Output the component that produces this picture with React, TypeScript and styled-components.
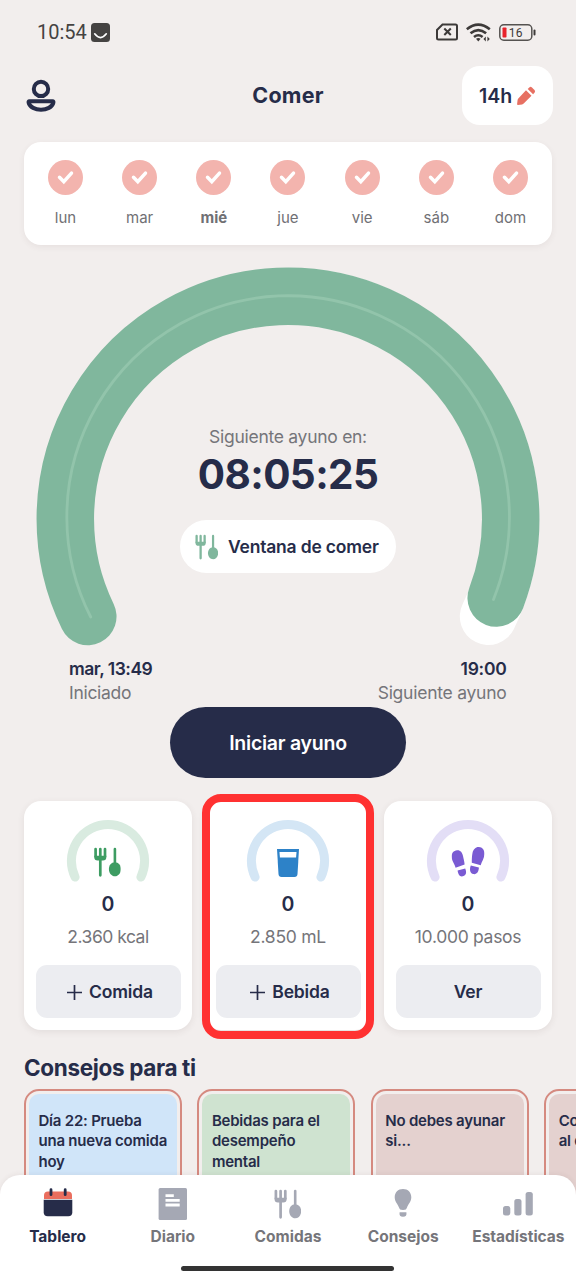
import React from "react";
import styled, { createGlobalStyle } from "styled-components";

const navy = "#262c49";
const gray = "#75757a";

const Global = createGlobalStyle`
  * { box-sizing: border-box; }
  body { margin: 0; background: #f2eeed; font-family: Inter, "Liberation Sans", sans-serif; }
`;

const Screen = styled.div`
  position: relative;
  width: 576px;
  height: 1280px;
  overflow: hidden;
  background: #f2eeed;
  color: ${navy};
  display: flex;
  flex-direction: column;
`;

const Label = styled.span<{ $size: number; $line: number; $weight?: number; $color?: string; $track?: number }>`
  display: block;
  white-space: nowrap;
  font-size: ${(p) => p.$size}px;
  line-height: ${(p) => p.$line}px;
  font-weight: ${(p) => p.$weight ?? 400};
  color: ${(p) => p.$color ?? navy};
  letter-spacing: ${(p) => p.$track ?? 0}px;
`;

const StatusBar = styled.div`
  height: 66px;
  flex: none;
  display: flex;
  justify-content: space-between;
  padding: 20px 40px 0 37px;
`;

const StatusGroup = styled.div<{ $gap: number }>`
  display: flex;
  align-items: center;
  height: 24px;
  gap: ${(p) => p.$gap}px;
`;

const Clock = styled.span`
  font: 400 20px/24px Roboto, sans-serif;
  color: #454342;
`;

const Header = styled.header`
  height: 59px;
  flex: none;
  display: grid;
  grid-template-columns: 90px 1fr 90px;
  align-items: center;
  padding: 0 24px;
`;

const Title = styled.div`
  justify-self: center;
  padding-bottom: 1px;
`;

const PlanButton = styled.button`
  height: 59px;
  width: 91px;
  border: 0;
  border-radius: 18px;
  background: #fff;
  font-family: inherit;
  display: flex;
  align-items: center;
  justify-content: center;
  gap: 4px;
  padding: 0;
`;

const Week = styled.div`
  margin: 17px 24px 0;
  height: 103px;
  flex: none;
  padding: 18px 4.4px 0;
  border-radius: 17px;
  background: #fff;
  box-shadow: 0 2px 6px rgba(80, 60, 50, 0.07);
  display: grid;
  grid-template-columns: repeat(7, 1fr);
`;

const Day = styled.div`
  display: flex;
  flex-direction: column;
  align-items: center;
  gap: 13px;
`;

const Timer = styled.section`
  height: 378px;
  flex: none;
  margin-top: 22px;
  display: grid;
  justify-items: center;
  > * { grid-area: 1 / 1; }
`;

const TimerInfo = styled.div`
  display: flex;
  flex-direction: column;
  align-items: center;
  padding-top: 158px;
`;

const Pill = styled.div`
  margin-top: 19px;
  width: 216px;
  height: 53px;
  border-radius: 27px;
  background: #fff;
  display: flex;
  align-items: center;
  padding-left: 15px;
  gap: 10px;
`;

const Times = styled.div`
  height: 62px;
  flex: none;
  display: flex;
  justify-content: space-between;
  padding: 12px 69.5px 0 69px;
`;

const TimeBlock = styled.div<{ $right?: boolean }>`
  display: flex;
  flex-direction: column;
  align-items: ${(p) => (p.$right ? "flex-end" : "flex-start")};
`;

const Start = styled.button`
  align-self: center;
  flex: none;
  width: 236px;
  height: 71px;
  border: 0;
  border-radius: 36px;
  background: ${navy};
  font-family: inherit;
  display: flex;
  align-items: center;
  justify-content: center;
`;

const Cards = styled.div`
  flex: none;
  margin: 23px 24px 0;
  display: grid;
  grid-template-columns: repeat(3, 1fr);
  gap: 12px;
`;

const Card = styled.div`
  position: relative;
  height: 229px;
  border-radius: 17px;
  background: #fff;
  box-shadow: 0 2px 7px rgba(80, 60, 50, 0.09);
  display: flex;
  flex-direction: column;
  align-items: center;
  padding-top: 18px;
`;

const Highlight = styled.div`
  position: absolute;
  inset: -7px -2px -9px;
  border: 8px solid #ff3131;
  border-radius: 19px;
`;

const CardAction = styled.button<{ $withIcon: boolean }>`
  margin-top: 16px;
  width: 145px;
  height: 53px;
  border: 0;
  border-radius: 11px;
  background: #ecedf1;
  font-family: inherit;
  display: flex;
  align-items: center;
  justify-content: center;
  gap: 7px;
  padding: 1px 0 0 ${(p) => (p.$withIcon ? 4 : 0)}px;
`;

const Tips = styled.section`
  flex: none;
  padding: 23px 0 0 24px;
`;

const TipRow = styled.div`
  display: flex;
  gap: 15.4px;
  margin-top: 6px;
`;

const Tip = styled.article`
  flex: none;
  width: 158px;
  height: 170px;
  border: 2px solid #d58a80;
  border-radius: 15px;
  padding: 3px;
`;

const TipBody = styled.div<{ $bg: string }>`
  height: 100%;
  border-radius: 10px;
  background: ${(p) => p.$bg};
  padding: 17px 0 0 9.5px;
`;

const Nav = styled.nav`
  position: absolute;
  left: 0;
  right: 0;
  bottom: 0;
  height: 105px;
  border-radius: 20px 20px 0 0;
  background: #fff;
  box-shadow: 0 -1px 5px rgba(80, 60, 50, 0.07);
  display: flex;
  flex-direction: column;
  align-items: center;
`;

const NavItems = styled.div`
  height: 91px;
  width: 576px;
  display: grid;
  grid-template-columns: repeat(5, 1fr);
`;

const NavItem = styled.div`
  display: flex;
  flex-direction: column;
  align-items: center;
  padding-top: 12px;
  gap: 5px;
`;

const HomeBar = styled.div`
  width: 213px;
  height: 5px;
  margin-right: 1px;
  border-radius: 3px;
  background: #333;
`;

const Utensils = ({ color, w, h }: { color: string; w: number; h: number }) => (
  <svg width={w} height={h} viewBox="0 0 27 30" fill="none" stroke={color} strokeLinecap="round">
    <path d="M1.900 2v7.500M6.600 2v26.300M11.300 2v7.500" strokeWidth="2.700" />
    <path d="M.6 8.800h12v1.500q0 3.300-3.300 3.300H3.900q-3.300 0-3.300-3.300z" fill={color} stroke="none" />
    <path d="M21.200 2v15" strokeWidth="2.600" />
    <path d="M21.200 15.200c3.700 0 6 3.300 6 6.800 0 4.300-2.700 7.300-6 7.300s-6-3-6-7.300c0-3.500 2.300-6.800 6-6.800z" fill={color} stroke="none" />
  </svg>
);

const Glass = () => (
  <svg width="24" height="30" viewBox="0 0 24 30">
    <path d="M1 1h22l-1.500 25q-.2 3-3 3h-13q-2.800 0-3-3z" fill="#2d82c8" />
    <path d="M3.500 4h17l-.4 5.600H3.900z" fill="#fff" />
  </svg>
);

const Steps = () => (
  <svg width="33" height="31" viewBox="0 0 33 31" fill="#7a5bd3">
    <path d="M5.600 3.300c3.200-.3 5.200 2.200 5.900 5.700.5 2.700 1.400 5.200 1.600 8.500L4.100 20.700C3.400 17 .5 14.700.2 10.200-.1 6.300 2 3.600 5.600 3.300z" />
    <path d="M6.100 23.600l7.600-2.200c1.300 3 1.500 6.300-1.700 7.700-3.500 1.300-5.400-1.400-5.900-5.500z" />
    <path d="M27.400.1c-3.300-.2-5.500 2.300-6.400 5.800-.6 2.900-.7 6.300-.7 9.900l8.900 2.500c1-3.600 3.600-7 3.800-11.300.1-3.700-2-6.700-5.600-6.900z" />
    <path d="M19.300 18.500l8.100 2.100c-.1 4-2.100 7.100-5.500 6.500-3.600-.8-4.100-4.900-2.600-8.600z" />
  </svg>
);

const Gauge = ({ color, children }: { color: string; children: React.ReactNode }) => (
  <svg width="84" height="64" viewBox="-42 -42 84 64">
    <path d="M-32.900 16.100A36.600 36.600 0 1 1 32.900 16.100" fill="none" stroke={color} strokeWidth="9" strokeLinecap="round" />
    {children}
  </svg>
);

const Plus = () => (
  <svg width="15" height="15" viewBox="0 0 15 15" stroke={navy} strokeWidth="1.700">
    <path d="M7.500 0v15M0 7.500h15" />
  </svg>
);

const CalendarIcon = () => (
  <svg width="30" height="34" viewBox="0 0 30 34">
    <path d="M1 12V8.500q0-4 4-4h20q4 0 4 4V12z" fill="#ea6e5e" />
    <path d="M.7 12.800h28.600v12.500q0 4-4 4H4.700q-4 0-4-4z" fill={navy} />
    <path d="M8 2.700v5M22.200 2.700v5" stroke={navy} strokeWidth="2.800" strokeLinecap="round" />
  </svg>
);

const DiaryIcon = () => (
  <svg width="30" height="34" viewBox="0 0 30 34">
    <rect x=".6" y="1" width="28.400" height="32" rx="1.500" fill="#a5a8b4" />
    <path d="M7.500 7.200h8.300v2.800H7.500zM7.500 12h14.200v2.800H7.500zM7.500 16.600h14.200v2.900H7.500z" fill="#fff" />
  </svg>
);

const BulbIcon = () => (
  <svg width="30" height="34" viewBox="0 0 30 34" fill="#a5a8b4">
    <path d="M15 2c5 0 8.300 3.500 8.300 8.200 0 4.600-3 6.500-4.300 10.300-.5 1.700-1.300 2.500-4 2.500s-3.500-.8-4-2.500C9.700 16.700 6.700 14.800 6.700 10.200 6.700 5.500 10 2 15 2z" />
    <path d="M11.600 25.200h6.800q.8 4.500-3.400 4.500t-3.400-4.500z" />
  </svg>
);

const BarsIcon = () => (
  <svg width="32" height="34" viewBox="0 0 32 34" fill="#a5a8b4">
    <rect x="1" y="19" width="7.300" height="9.600" rx="2.500" />
    <rect x="12.300" y="12" width="7.200" height="16.600" rx="2.500" />
    <rect x="23.600" y="5" width="7.200" height="23.600" rx="2.500" />
  </svg>
);

const days = ["lun", "mar", "mié", "jue", "vie", "sáb", "dom"];

const goals = [
  {
    goal: "2.360 kcal", track: -0.5, action: "Comida", plus: true, ring: "#d9ebe0",
    icon: <g transform="translate(-14.300 -14)"><Utensils color="#3d9c62" w={27} h={30} /></g>,
  },
  {
    goal: "2.850 mL", track: -0.25, action: "Bebida", plus: true, ring: "#d4e6f5", marked: true,
    icon: <g transform="translate(-12 -13)"><Glass /></g>,
  },
  {
    goal: "10.000 pasos", track: -0.3, action: "Ver", plus: false, ring: "#e3def6",
    icon: <g transform="translate(-16.500 -14)"><Steps /></g>,
  },
];

const tips = [
  { bg: "#d0e5f9", lines: ["Día 22: Prueba", "una nueva comida", "hoy"] },
  { bg: "#cfe3d0", lines: ["Bebidas para el", "desempeño", "mental"] },
  { bg: "#e4d1cf", lines: ["No debes ayunar", "si..."] },
  { bg: "#e4d1cf", lines: ["Consejos", "al comer"] },
];

const tabs = [
  { name: "Tablero", icon: <CalendarIcon /> },
  { name: "Diario", icon: <DiaryIcon /> },
  { name: "Comidas", icon: <Utensils color="#a5a8b4" w={27} h={34} /> },
  { name: "Consejos", icon: <BulbIcon /> },
  { name: "Estadísticas", icon: <BarsIcon /> },
];

export default function App() {
  return (
    <Screen>
      <Global />
      <StatusBar>
        <StatusGroup $gap={4}>
          <Clock>10:54</Clock>
          <svg width="19" height="19" viewBox="0 0 19 19">
            <rect width="19" height="19" rx="3.500" fill="#454342" />
            <path d="M3.700 10.800q5.800 7.500 11.600 0" fill="none" stroke="#fff" strokeWidth="1.700" strokeLinecap="round" />
          </svg>
        </StatusGroup>
        <StatusGroup $gap={8}>
          <svg width="22" height="18" viewBox="0 0 22 18" fill="none" stroke="#3d3a39" strokeWidth="2">
            <path d="M6.500 1.500h13q1.500 0 1.500 1.500v12q0 1.500-1.500 1.500h-17q-1.500 0-1.500-1.500v-8z" />
            <path d="M8.300 5.500l6.500 6.500m0-6.500l-6.500 6.500" />
          </svg>
          <svg width="25" height="19" viewBox="0 0 25 19" fill="none" stroke="#3d3a39" strokeWidth="2.600">
            <path d="M.8 6.300q11.500-9.500 23 0M4.500 10.300q7.800-6.400 15.600 0M8 14q4.300-3.500 8.600 0" />
            <path d="M10 15.800q2.300-1.700 4.600 0l-2.300 2.700z" fill="#3d3a39" stroke="none" />
            <path d="M19.800 13.500v5l-2.400-2.400zM21.400 18.500v-5l2.400 2.400z" fill="#3d3a39" stroke="none" />
          </svg>
          <svg width="37" height="17" viewBox="0 0 37 17">
            <rect x=".8" y=".8" width="32" height="15.400" rx="4" fill="none" stroke="#555250" strokeWidth="1.500" />
            <rect x="3.500" y="3.500" width="4" height="10" rx=".8" fill="#e8222b" />
            <rect x="34.500" y="5.500" width="2" height="6" rx="1" fill="#3d3a39" />
            <text x="9.700" y="12.700" fontFamily="Roboto" fontSize="12" letterSpacing=".2" fill="#3d3a39">16</text>
          </svg>
        </StatusGroup>
      </StatusBar>

      <Header>
        <svg width="34" height="36" viewBox="0 0 34 36" fill="none" stroke={navy} strokeWidth="4">
          <circle cx="17" cy="10.900" r="7.200" />
          <path d="M5.400 23.300h23.200q1.100 0 .8 1.200C28.400 29.200 22.500 31.700 17 31.700S5.600 29.200 4.600 24.500q-.3-1.200.8-1.200z" />
        </svg>
        <Title><Label $size={21.500} $line={28} $weight={700} $track={0.25}>Comer</Label></Title>
        <PlanButton>
          <Label $size={19.500} $line={24} $weight={600}>14h</Label>
          <svg width="20" height="20" viewBox="0 0 20 20" fill="#e77062">
            <path d="M10 4.200l5.500 5.500-7.800 7.800q-.7.700-1.600.9L2 19q-1.100 0-.9-1l.5-4.100q.1-.8.700-1.400z" />
            <path d="M11.700 2.900l1.600-1.500q1.300-1.100 2.600.1l2.600 2.600q1.200 1.300 0 2.600l-1.400 1.500z" />
          </svg>
        </PlanButton>
      </Header>

      <Week>
        {days.map((d) => (
          <Day key={d}>
            <svg width="35" height="35" viewBox="0 0 35 35">
              <circle cx="17.500" cy="17.500" r="17.500" fill="#f3b4ae" />
              <path d="M11.500 17.300l4.300 4.400 7.700-8.600" fill="none" stroke="#fff" strokeWidth="3.500" strokeLinecap="round" />
            </svg>
            <Label $size={15} $line={20} $weight={d === "mié" ? 700 : 400} $color="#707074">{d}</Label>
          </Day>
        ))}
      </Week>

      <Timer>
        <svg width="504" height="380" viewBox="-252 -252 504 380" fill="none" strokeLinecap="round">
          <path d="M0 -222.700A222.700 222.700 0 0 1 200.300 97.500" stroke="#fff" strokeWidth="57" />
          <path d="M-200.200 97.500A222.700 222.700 0 1 1 208.200 79" stroke="#80b79d" strokeWidth="57.500" />
          <path d="M-197.300 98A221.300 221.300 0 1 1 205.500 80.500" stroke="#92c4ab" strokeWidth="2.800" />
        </svg>
        <TimerInfo>
          <Label $size={17.500} $line={24} $color={gray} $track={-0.28}>Siguiente ayuno en:</Label>
          <Label $size={40.500} $line={52} $weight={700} $track={-0.6}>08:05:25</Label>
          <Pill>
            <Utensils color="#80b79d" w={23} h={26} />
            <Label $size={17.500} $line={24} $weight={600} $track={-0.2}>Ventana de comer</Label>
          </Pill>
        </TimerInfo>
      </Timer>

      <Times>
        <TimeBlock>
          <Label $size={17.500} $line={24} $weight={600} $track={-0.5}>mar, 13:49</Label>
          <Label $size={17.500} $line={24} $color={gray} $track={-0.3}>Iniciado</Label>
        </TimeBlock>
        <TimeBlock $right>
          <Label $size={17.500} $line={24} $weight={600} $track={-0.25}>19:00</Label>
          <Label $size={17.500} $line={24} $color={gray} $track={-0.25}>Siguiente ayuno</Label>
        </TimeBlock>
      </Times>

      <Start><Label $size={19.500} $line={26} $weight={600} $color="#fff" $track={-0.25}>Iniciar ayuno</Label></Start>

      <Cards>
        {goals.map((g) => (
          <Card key={g.goal}>
            <Gauge color={g.ring}>{g.icon}</Gauge>
            <Label $size={19.500} $line={42} $weight={600}>0</Label>
            <Label $size={17.500} $line={24} $color={gray} $track={g.track}>{g.goal}</Label>
            <CardAction $withIcon={g.plus}>
              {g.plus && <Plus />}
              <Label $size={17.500} $line={24} $weight={600} $track={-0.15}>{g.action}</Label>
            </CardAction>
            {g.marked && <Highlight />}
          </Card>
        ))}
      </Cards>

      <Tips>
        <Label $size={22.500} $line={30} $weight={700} $track={-0.35}>Consejos para ti</Label>
        <TipRow>
          {tips.map((t) => (
            <Tip key={t.lines[0]}>
              <TipBody $bg={t.bg}>
                {t.lines.map((l) => (
                  <Label key={l} $size={15} $line={20.300} $weight={600} $track={-0.22}>{l}</Label>
                ))}
              </TipBody>
            </Tip>
          ))}
        </TipRow>
      </Tips>

      <Nav>
        <NavItems>
          {tabs.map((t, i) => (
            <NavItem key={t.name}>
              {t.icon}
              <Label $size={15.500} $line={22} $weight={700} $color={i === 0 ? navy : gray}>{t.name}</Label>
            </NavItem>
          ))}
        </NavItems>
        <HomeBar />
      </Nav>
    </Screen>
  );
}
